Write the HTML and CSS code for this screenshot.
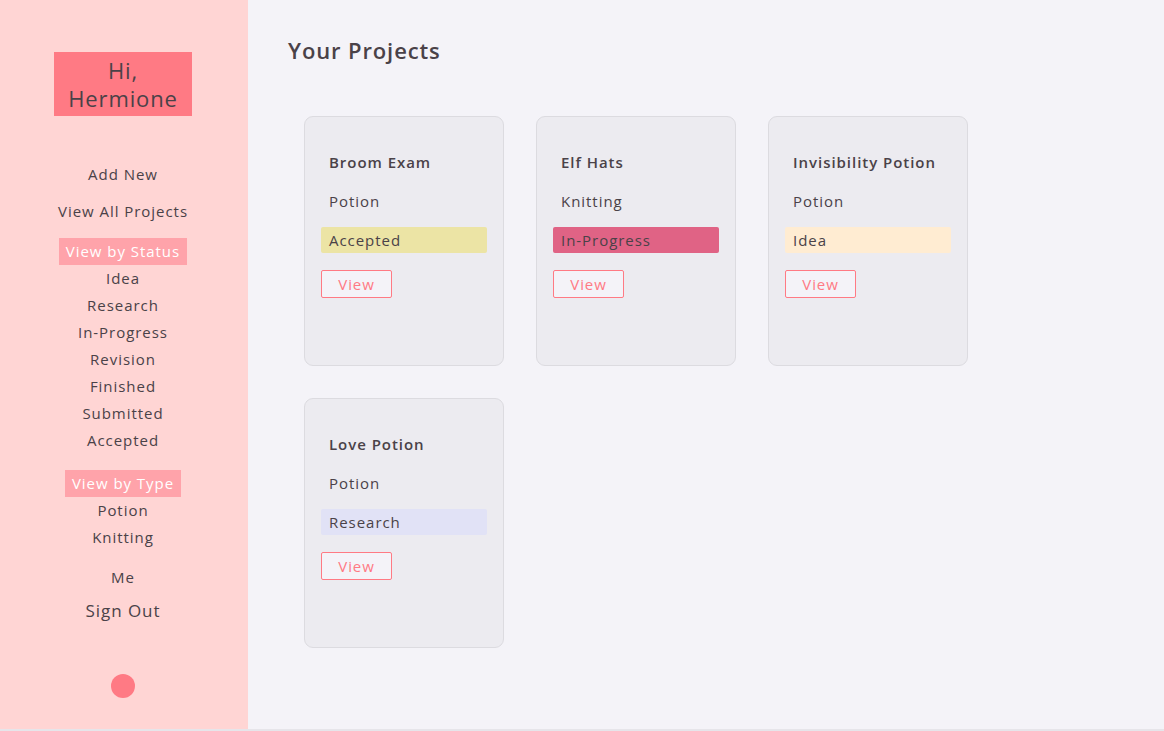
FILE: index.html
```html
<!DOCTYPE html>
<html>
<head>
<meta charset="utf-8">
<link rel="stylesheet" href="styles.css">
</head>
<body>
<div class="app">
  <aside class="sidebar">
    <div class="greeting">Hi,<br>Hermione</div>
    <nav class="nav">
      <a class="nav-link add">Add New</a>
      <a class="nav-link all">View All Projects</a>
      <div class="nav-head status-head">View by Status</div>
      <a class="nav-item">Idea</a>
      <a class="nav-item">Research</a>
      <a class="nav-item">In-Progress</a>
      <a class="nav-item">Revision</a>
      <a class="nav-item">Finished</a>
      <a class="nav-item">Submitted</a>
      <a class="nav-item">Accepted</a>
      <div class="nav-head type-head">View by Type</div>
      <a class="nav-item">Potion</a>
      <a class="nav-item">Knitting</a>
      <a class="nav-item me">Me</a>
      <a class="nav-item signout">Sign Out</a>
    </nav>
    <div class="dot"></div>
  </aside>
  <main class="main">
    <h1 class="title">Your Projects</h1>
    <div class="grid">
      <div class="card">
        <div class="card-title">Broom Exam</div>
        <div class="card-type">Potion</div>
        <div class="status accepted">Accepted</div>
        <button class="view-btn">View</button>
      </div>
      <div class="card">
        <div class="card-title">Elf Hats</div>
        <div class="card-type">Knitting</div>
        <div class="status progress">In-Progress</div>
        <button class="view-btn">View</button>
      </div>
      <div class="card">
        <div class="card-title">Invisibility Potion</div>
        <div class="card-type">Potion</div>
        <div class="status idea">Idea</div>
        <button class="view-btn">View</button>
      </div>
      <div class="card">
        <div class="card-title">Love Potion</div>
        <div class="card-type">Potion</div>
        <div class="status research">Research</div>
        <button class="view-btn">View</button>
      </div>
    </div>
  </main>
</div>
</body>
</html>
```

FILE: styles.css
```css
* { box-sizing: border-box; }
html, body {
  margin: 0;
  padding: 0;
}
body {
  background: #e6e5ea;
  font-family: "Open Sans", "Noto Sans", sans-serif;
  letter-spacing: 0.06em;
  color: #4a4248;
  height: 731px;
  overflow: hidden;
}
.app {
  display: flex;
  height: 729px;
}
.sidebar {
  width: 248px;
  flex: 0 0 248px;
  background: #ffd5d4;
  display: flex;
  flex-direction: column;
  align-items: center;
  padding-top: 52px;
  padding-right: 2px;
}
.greeting {
  width: 138px;
  height: 64px;
  background: #ff7a84;
  font-size: 22px;
  line-height: 28px;
  text-align: center;
  padding-top: 4px;
  color: #4a4248;
  letter-spacing: 0.04em;
}
.nav {
  display: flex;
  flex-direction: column;
  align-items: center;
  margin-top: 45px;
  font-size: 15px;
}
.nav-link, .nav-item {
  line-height: 27px;
  height: 27px;
  color: #4a4248;
  white-space: nowrap;
}
.all { margin-top: 10px; }
.nav-head {
  background: #ffa3aa;
  color: #fff;
  line-height: 27px;
  height: 27px;
  padding: 0 7px;
  white-space: nowrap;
}
.status-head { margin-top: 13px; }
.type-head { margin-top: 16px; }
.me { margin-top: 13px; }
.signout {
  font-size: 17px;
  line-height: 30px;
  height: 30px;
  margin-top: 5px;
}
.dot {
  width: 24px;
  height: 24px;
  border-radius: 50%;
  background: #ff7a84;
  margin-top: 48px;
}
.main {
  flex: 1;
  background: #f4f3f8;
  padding: 36px 40px 0 40px;
}
.title {
  margin: 0;
  font-size: 22px;
  line-height: 28px;
  font-weight: 600;
  letter-spacing: 0.04em;
  color: #4a4248;
}
.grid {
  display: grid;
  grid-template-columns: repeat(3, 200px);
  gap: 32px;
  margin-top: 52px;
  margin-left: 16px;
}
.card {
  height: 250px;
  background: #ecebf0;
  border: 1px solid #dcdbe0;
  border-radius: 9px;
  padding: 34px 16px 0 16px;
  display: flex;
  flex-direction: column;
  align-items: flex-start;
}
.card-title {
  font-size: 15px;
  font-weight: 600;
  line-height: 22px;
  padding-left: 8px;
  white-space: nowrap;
}
.card-type {
  font-size: 15px;
  line-height: 22px;
  margin-top: 17px;
  padding-left: 8px;
}
.status {
  width: 166px;
  height: 26px;
  line-height: 26px;
  font-size: 15px;
  border-radius: 2px;
  padding-left: 8px;
  margin-top: 15px;
}
.accepted { background: #ece4a5; }
.progress { background: #e06385; }
.idea { background: #ffecd2; }
.research { background: #e1e2f6; }
.view-btn {
  margin-top: 17px;
  width: 71px;
  height: 28px;
  border: 1px solid #ff7a84;
  border-radius: 2px;
  background: #f4f3f8;
  color: #ff7a84;
  font-family: inherit;
  font-size: 15px;
  letter-spacing: 0.06em;
  padding: 0;
}
```
